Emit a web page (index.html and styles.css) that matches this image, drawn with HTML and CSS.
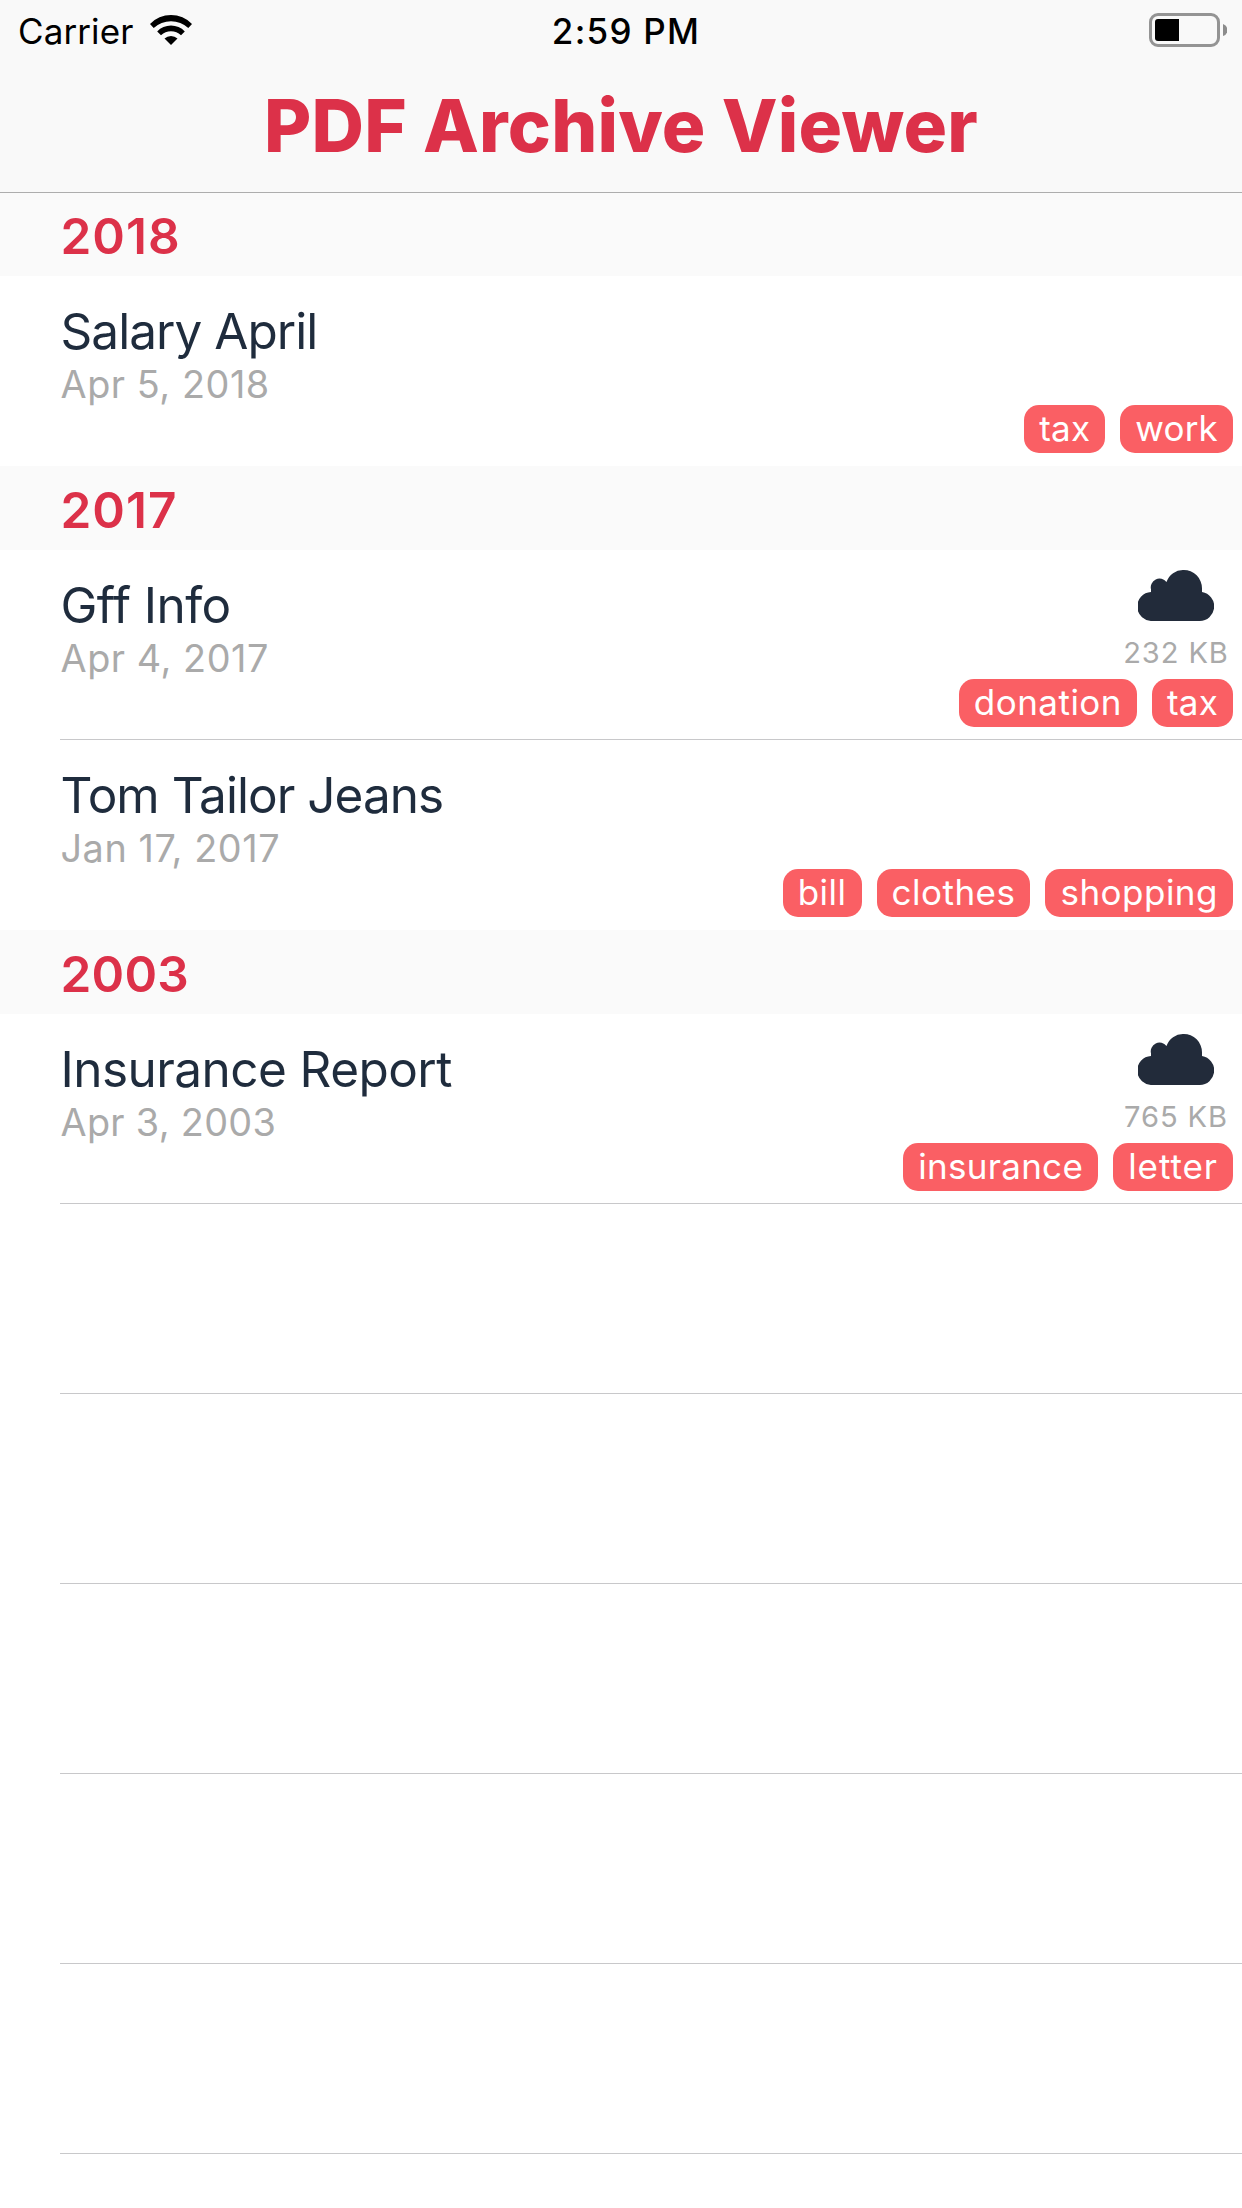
FILE: index.html
```html
<!DOCTYPE html>
<html lang="en">
<head>
<meta charset="utf-8">
<title>PDF Archive Viewer</title>
<link rel="stylesheet" href="styles.css">
</head>
<body>
<svg class="defs" aria-hidden="true">
  <symbol id="cloud" viewBox="0 0 76 51">
    <path d="M14.5 51A14.5 14.5 0 0 1 13 22V19.5A8.8 8.8 0 0 1 28.5 12A17.6 17.6 0 0 1 45.5 0A18.3 18.3 0 0 1 64 18.5V22A14.6 14.6 0 0 1 61.5 51Z"/>
  </symbol>
</svg>
<header class="navbar">
  <div class="status">
    <div class="status-left">
      <span class="carrier">Carrier</span>
      <svg class="wifi" viewBox="0 0 42 30">
        <path d="M0 9A29 29 0 0 1 42 9L38.3 13A25.4 25.4 0 0 0 3.7 13Z"/>
        <path d="M7.2 16.5A19 19 0 0 1 34.8 16.5L31 20.2A14.5 14.5 0 0 0 11 20.2Z"/>
        <path d="M14.5 23.6A9.7 9.7 0 0 1 27.5 23.6L21 30Z"/>
      </svg>
    </div>
    <span class="time">2:59 PM</span>
    <svg class="battery" viewBox="0 0 78 34">
      <rect class="battery-shell" x="1.5" y="1.5" width="68" height="31" rx="7.5"/>
      <path d="M9 6H30V28H9A3 3 0 0 1 6 25V9A3 3 0 0 1 9 6Z"/>
      <path class="battery-cap" d="M74 11A6.3 6.3 0 0 1 74 23Z"/>
    </svg>
  </div>
  <h1 class="title">PDF Archive Viewer</h1>
</header>
<main>
  <section>
    <h2 class="year">2018</h2>
    <article class="cell cell-end">
      <div class="info"><div class="name">Salary April</div><div class="date">Apr 5, 2018</div></div>
      <div class="tags"><span class="tag tag-snug">tax</span><span class="tag tag-snug">work</span></div>
    </article>
  </section>
  <section>
    <h2 class="year">2017</h2>
    <article class="cell">
      <div class="info"><div class="name name-loose">Gff Info</div><div class="date">Apr 4, 2017</div></div>
      <div class="download"><svg class="cloud"><use href="#cloud"/></svg><span class="size">232 KB</span></div>
      <div class="tags"><span class="tag">donation</span><span class="tag tag-snug">tax</span></div>
    </article>
    <article class="cell cell-end">
      <div class="info"><div class="name">Tom Tailor Jeans</div><div class="date">Jan 17, 2017</div></div>
      <div class="tags"><span class="tag">bill</span><span class="tag">clothes</span><span class="tag">shopping</span></div>
    </article>
  </section>
  <section>
    <h2 class="year year-snug">2003</h2>
    <article class="cell">
      <div class="info"><div class="name name-loose">Insurance Report</div><div class="date date-snug">Apr 3, 2003</div></div>
      <div class="download"><svg class="cloud"><use href="#cloud"/></svg><span class="size">765 KB</span></div>
      <div class="tags"><span class="tag tag-mid">insurance</span><span class="tag tag-wide">letter</span></div>
    </article>
  </section>
  <div class="blank">
    <div class="cell"></div>
    <div class="cell"></div>
    <div class="cell"></div>
    <div class="cell"></div>
    <div class="cell"></div>
  </div>
</main>
</body>
</html>
```

FILE: styles.css
```css
* { box-sizing: border-box; }

body {
  margin: 0;
  height: 2208px;
  overflow: hidden;
  background: #fff;
  font-family: Inter, "Liberation Sans", sans-serif;
}

.defs { display: none; }

/* Navigation bar */
.navbar {
  height: 193px;
  background: #f9f9f9;
  border-bottom: 1px solid #adadad;
}

.status {
  display: grid;
  grid-template-columns: 1fr auto 1fr;
  height: 82px;
  padding: 10px 15px 0 18px;
  font-size: 35px;
  line-height: 42px;
  color: #000;
}

.status-left { display: flex; align-items: flex-start; gap: 17px; }
.carrier { letter-spacing: 0.1px; }
.wifi { width: 42px; height: 30px; margin-top: 5px; }
.time { padding-left: 7px; font-weight: 550; letter-spacing: 1.25px; }
.battery { width: 78px; height: 34px; margin-top: 3px; justify-self: end; }
.battery-shell { fill: none; stroke: #949494; stroke-width: 3; }
.battery-cap { fill: #8c8c8c; }

.title {
  margin: 0;
  font-size: 72.6px;
  line-height: 88px;
  font-weight: 800;
  letter-spacing: 0.2px;
  text-align: center;
  color: #dc3149;
}

/* Sections */
.year {
  height: 84px;
  margin: 0;
  padding: 14px 0 0 60.5px;
  background: #fafafa;
  font-size: 49.5px;
  line-height: 60px;
  font-weight: 600;
  letter-spacing: 1px;
  color: #dc3149;
}

.year-snug { letter-spacing: 0.2px; }

/* The first heading begins beneath the bar's hairline */
section:first-child .year { height: 83px; padding-top: 13px; }

.cell {
  display: grid;
  grid-template-columns: 1fr 114px;
  grid-template-rows: 129px 48px;
  height: 190px;
  margin-left: 60px;
  padding-right: 9px;
  border-bottom: 1px solid #c8c8ca;
}

/* A following section heading takes the place of the separator */
.cell-end { border-bottom: 0; }

.info { padding: 25px 0 0 0.5px; white-space: nowrap; }

.name {
  font-size: 49.5px;
  line-height: 60px;
  letter-spacing: -0.96px;
  color: #1f2c3d;
}

.name-loose { letter-spacing: -0.56px; }

.date {
  font-size: 37.8px;
  line-height: 46px;
  letter-spacing: 0.55px;
  color: #aaa;
}

.date-snug { letter-spacing: 0.32px; }

.download {
  display: flex;
  flex-direction: column;
  align-items: center;
  gap: 14px;
  padding-top: 20px;
}

.cloud { width: 76px; height: 51px; fill: #222b3a; }

.size {
  font-size: 29.1px;
  line-height: 35px;
  letter-spacing: 0.9px;
  white-space: nowrap;
  color: #aaa;
}

.tags {
  grid-row: 2;
  grid-column: 1 / -1;
  display: flex;
  justify-content: flex-end;
  gap: 15px;
}

.tag {
  height: 48px;
  padding: 0 15px;
  border-radius: 15px;
  background: #fa5f64;
  color: #fff;
  font-size: 35px;
  line-height: 46px;
  letter-spacing: 0.49px;
}

.tag-snug { letter-spacing: 0.2px; }
.tag-mid { letter-spacing: 0.3px; }
.tag-wide { letter-spacing: 0.95px; }
```
